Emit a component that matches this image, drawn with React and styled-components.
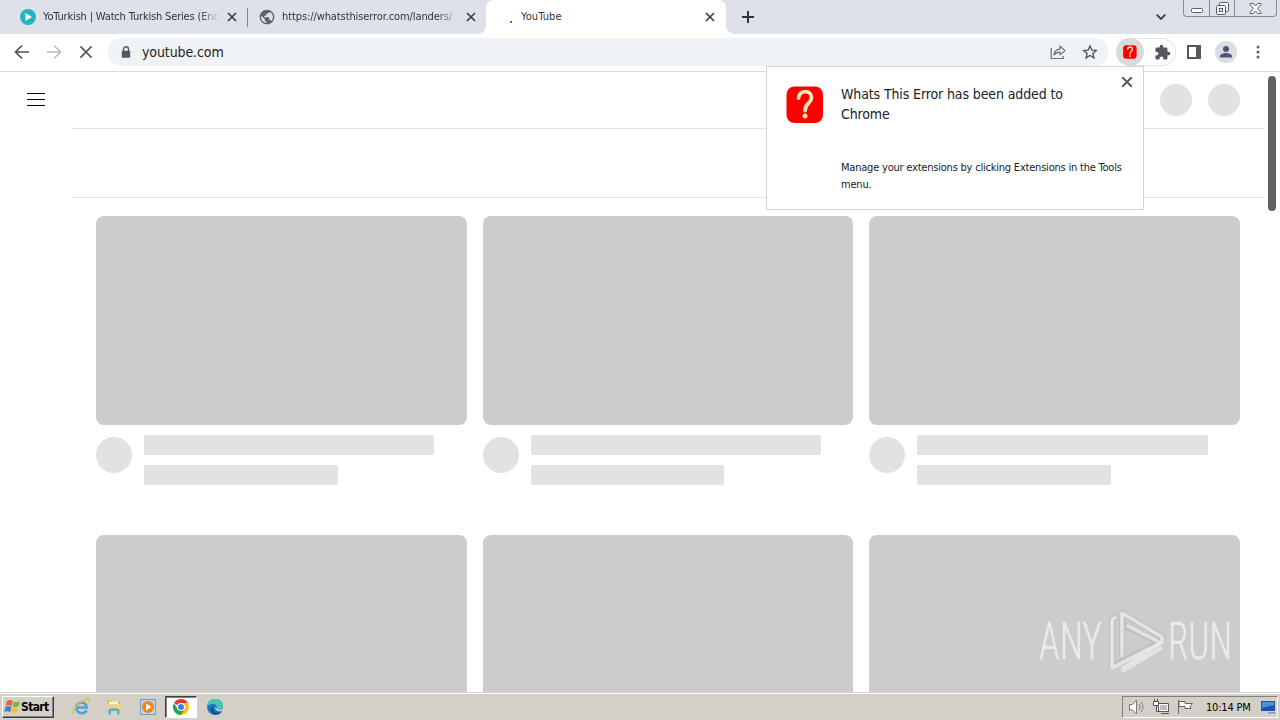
import React from 'react';
import styled, { createGlobalStyle } from 'styled-components';

const cards = [1, 2, 3, 4, 5, 6];

const CloseIcon = ({ size = 10, color = '#3c4043', width = 1.7 }) => (
  <svg width={size} height={size} viewBox="0 0 10 10" stroke={color} strokeWidth={width}>
    <path d="M1 1l8 8M9 1l-8 8" />
  </svg>
);

const QuestionIcon = ({ size }) => (
  <svg width={size} height={size} viewBox="0 0 38 38" fill="none">
    <rect x="0.5" y="0.5" width="36.500" height="36.500" rx="8" fill="#fe0000" />
    <path d="M12.500 12c1-9 13-8 13-.5c0 6-6.500 5.500-6.500 13" stroke="#ffe2b8" strokeWidth="3.800" strokeLinecap="round" />
    <circle cx="19" cy="30" r="2.500" fill="#ffe2b8" />
  </svg>
);

function TabStrip() {
  return (
    <StTabStrip>
      <StTab>
        <svg width="16" height="16" viewBox="0 0 16 16">
          <circle cx="8" cy="8" r="8" fill="#1fb5c1" />
          <path d="M5.500 4l6.500 4-6.500 4z" fill="#fff" />
        </svg>
        <StTabTitle $fade $spacing="-0.17px">YoTurkish | Watch Turkish Series (Enc</StTabTitle>
        <CloseIcon />
      </StTab>
      <StTab $divider>
        <svg width="16" height="16" viewBox="0 0 24 24" fill="#5f6368">
          <path d="M12 1C5.900 1 1 5.900 1 12s4.900 11 11 11 11-4.900 11-11S18.100 1 12 1zm-1 19.900C6.600 20.400 3.100 16.600 3.100 12c0-.7.100-1.300.2-1.900L8.700 15.400v1.100c0 1.200 1 2.200 2.300 2.200zm7.700-2.800c-.3-.9-1.100-1.500-2.100-1.500h-1.100v-3.300c0-.6-.5-1.100-1.100-1.100H7.700V10h2.200c.6 0 1.100-.5 1.100-1.100V6.700h2.200c1.200 0 2.200-1 2.200-2.200V4c3.200 1.300 5.500 4.400 5.500 8 0 2.300-.9 4.500-2.200 6.100z" />
        </svg>
        <StTabTitle $fade $spacing="-0.1px">https://whatsthiserror.com/landers/</StTabTitle>
        <CloseIcon />
      </StTab>
      <StTab $active>
        <StSpinner />
        <StTabTitle $spacing="0.1px">YouTube</StTabTitle>
        <CloseIcon />
      </StTab>
      <StNewTab>
        <svg width="12" height="12" viewBox="0 0 12 12" stroke="#303238" strokeWidth="2">
          <path d="M6 0v12M0 6h12" />
        </svg>
      </StNewTab>
      <StTabSearch>
        <svg width="10" height="6" viewBox="0 0 10 6" fill="none" stroke="#3c4043" strokeWidth="1.800">
          <path d="M0.700 0.700L5 5L9.300 0.700" />
        </svg>
      </StTabSearch>
      <StWindowControls>
        <StWindowButton $width="25px">
          <svg width="12" height="5" viewBox="0 0 12 5">
            <rect x="0.500" y="0.500" width="11" height="4" rx="1" fill="#fff" stroke="#5a6070" />
          </svg>
        </StWindowButton>
        <StWindowButton $width="25px" $raise>
          <svg width="13" height="13" viewBox="0 0 13 13" fill="#f4f5f7" stroke="#5a6070">
            <rect x="3.500" y="0.500" width="9" height="9" rx="1" />
            <rect x="0.500" y="3.500" width="9" height="9" rx="1" />
            <rect x="3.500" y="6.500" width="3" height="3" />
          </svg>
        </StWindowButton>
        <StWindowButton $width="42px" $raise>
          <svg width="13" height="11" viewBox="0 0 13 11" fill="#f8f8fa" stroke="#5a6070">
            <path d="M1 .5h3.300L6.500 3 8.700.5H12v1L8.700 5.500 12 9.500v1H8.700L6.500 8l-2.200 2.500H1v-1l3.300-4L1 1.500z" />
          </svg>
        </StWindowButton>
      </StWindowControls>
    </StTabStrip>
  );
}

function Toolbar() {
  return (
    <StToolbar>
      <StNavButton>
        <svg width="16" height="16" viewBox="0 0 16 16" fill="none" stroke="#505357" strokeWidth="1.700">
          <path d="M15 8H2M8 1.500L1.500 8L8 14.500" />
        </svg>
      </StNavButton>
      <StNavButton>
        <svg width="16" height="16" viewBox="0 0 16 16" fill="none" stroke="#babcbe" strokeWidth="1.700">
          <path d="M1 8h13M8 1.500L14.500 8L8 14.500" />
        </svg>
      </StNavButton>
      <StNavButton>
        <CloseIcon size={14} color="#505357" width={1.1} />
      </StNavButton>
      <StAddressBar>
        <svg width="10" height="13" viewBox="0 0 10 13">
          <path d="M2.500 6V3.300a2.500 2.500 0 0 1 5 0V6" fill="none" stroke="#55585d" strokeWidth="1.400" />
          <rect x="0.800" y="4.700" width="8.400" height="7" rx="1" fill="#55585d" />
        </svg>
        <StUrl>youtube.com</StUrl>
        <svg width="16" height="16" viewBox="0 0 16 16" fill="none" stroke="#6b6f74" strokeWidth="1.200">
          <path d="M1.200 4v10.500h12V12" />
          <path d="M4 11c.4-4 2.500-5.700 6-5.900V2.200L15 6.600l-5 4.300V8.200C7.400 8.200 5.500 9 4 11z" strokeLinejoin="round" />
        </svg>
        <svg width="16" height="16" viewBox="0 0 24 24" fill="none" stroke="#505358" strokeWidth="2">
          <path d="M12 3l2.700 6.200 6.700.6-5 4.500 1.500 6.500L12 17.300l-5.900 3.500 1.500-6.500-5-4.500 6.700-.6z" />
        </svg>
      </StAddressBar>
      <StExtensions>
        <StExtensionButton>
          <QuestionIcon size={14} />
        </StExtensionButton>
        <svg width="17" height="17" viewBox="0 0 24 24" fill="#55585d">
          <path d="M20.500 11H19V7c0-1.100-.9-2-2-2h-4V3.500C13 2.120 11.880 1 10.500 1S8 2.120 8 3.500V5H4c-1.100 0-1.990.9-1.990 2v3.800H3.500c1.490 0 2.700 1.210 2.700 2.700s-1.210 2.700-2.700 2.700H2V20c0 1.100.9 2 2 2h3.800v-1.500c0-1.490 1.210-2.700 2.700-2.700s2.700 1.210 2.700 2.700V22H17c1.100 0 2-.9 2-2v-4h1.500c1.380 0 2.500-1.120 2.500-2.500S21.880 11 20.500 11z" />
        </svg>
      </StExtensions>
      <StToolbarEnd>
        <svg width="14" height="14" viewBox="0 0 14 14">
          <path d="M0 0h14v14H0zM2 2v10h7V2z" fill="#55585d" fillRule="evenodd" />
        </svg>
        <StProfile>
          <svg width="12" height="12" viewBox="0 0 12 12" fill="#4a5672">
            <circle cx="6" cy="3" r="3" />
            <path d="M0 11.500V10c0-2 4-3 6-3s6 1 6 3v1.500z" />
          </svg>
        </StProfile>
        <svg width="4" height="14" viewBox="0 0 4 14" fill="#5f6368">
          <circle cx="2" cy="2" r="1.500" />
          <circle cx="2" cy="7" r="1.500" />
          <circle cx="2" cy="12" r="1.500" />
        </svg>
      </StToolbarEnd>
    </StToolbar>
  );
}

function ExtensionPopup() {
  return (
    <StPopup>
      <QuestionIcon size={38} />
      <StPopupBody>
        <StPopupTitle>
          Whats This Error has been added to
          <br />
          Chrome
        </StPopupTitle>
        <StPopupText>
          Manage your extensions by clicking Extensions in the Tools
          <br />
          menu.
        </StPopupText>
      </StPopupBody>
      <StPopupClose>
        <CloseIcon size={12} color="#55585d" width={1.6} />
      </StPopupClose>
    </StPopup>
  );
}

function Watermark() {
  return (
    <StWatermark width="206" height="70" viewBox="0 0 206 70">
      <g fill="#fff" fillOpacity="0.62" stroke="#fff" strokeOpacity="0.25" strokeWidth="0.800" fontFamily="Roboto, sans-serif" fontWeight="300" fontSize="51">
        <text x="6" y="53" textLength="63" lengthAdjust="spacingAndGlyphs">ANY</text>
        <text x="135" y="53" textLength="64" lengthAdjust="spacingAndGlyphs">RUN</text>
      </g>
      <g fill="none" strokeLinejoin="round" strokeLinecap="round">
        <g stroke="#aaa" strokeWidth="6" strokeOpacity="0.35">
          <path d="M82 12l-3 2v46l48-24" />
          <path d="M89 49V7l40 24M90 19l37 18-36 26" />
        </g>
        <g stroke="#e8e8e8" strokeWidth="3.600" strokeOpacity="0.9">
          <path d="M82 12c-2 0-3 2-3 4v46l50-26" />
          <path d="M89 50V7l40 24v4" />
          <path d="M95 20l33 17-38 25v3l38-23" />
        </g>
      </g>
    </StWatermark>
  );
}

function Taskbar() {
  return (
    <StTaskbar>
      <StStart>
        <svg width="17" height="16" viewBox="0 0 17 16">
          <path d="M3 2c2-1.500 4-1 6 0L7.700 7c-2-1-4-1-6 0z" fill="#e8632b" />
          <path d="M10 2.500c2 1 4 1 6-.5L14.700 7c-2 1.500-4 1.500-6 .5z" fill="#75b643" />
          <path d="M1.500 8c2-1.300 4-1 6 0L6.200 13c-2-1-4-1-6 0z" fill="#3d83c9" />
          <path d="M8.500 8.500c2 1 4 1 6-.3L13.200 13c-2 1.500-4 1.500-6 .5z" fill="#f5c130" />
        </svg>
        Start
      </StStart>
      <StTaskButton $width="33px">
        <svg width="18" height="18" viewBox="0 0 18 18" fill="none">
          <path d="M14.500 12.500c-2.500 4.500-10 3.500-10-3s10-6.500 10.200 0H5" stroke="#49a6dc" strokeWidth="2.600" />
          <path d="M1.500 16C-1 11 14-2 17 1.500c.7 1 0 2.500-.7 3.500" stroke="#e4b83f" strokeWidth="1.300" />
        </svg>
      </StTaskButton>
      <StTaskButton $width="34px">
        <svg width="16" height="16" viewBox="0 0 16 16">
          <path d="M1 1h5l1 1.500h7V13H1z" fill="#e0bd58" />
          <path d="M3 2.500h9v4H3z" fill="#fff6d0" />
          <path d="M1 5h14v8.500H1z" fill="#ecd486" />
          <path d="M2.500 15.500V11c0-2.500 11-2.500 11 0v4.500H11V12H5v3.500z" fill="#5aabd8" />
        </svg>
      </StTaskButton>
      <StTaskButton $width="34px">
        <svg width="16" height="17" viewBox="0 0 16 17">
          <rect x="0.500" y="0.500" width="15" height="15" fill="#b8d5ec" stroke="#6f9fc8" />
          <circle cx="8" cy="8" r="6" fill="#f58211" />
          <path d="M6.200 4.500L11.500 8l-5.300 3.500z" fill="#fff" />
        </svg>
      </StTaskButton>
      <StTaskButton $width="32px" $pressed>
        <svg width="16" height="16" viewBox="0 0 16 16">
          <path d="M8 8L1.070 4A8 8 0 0 1 14.930 4z" fill="#e33b2e" />
          <path d="M8 8V4h6.930A8 8 0 0 1 8 16z" fill="#fbc116" />
          <path d="M8 16A8 8 0 0 1 1.070 4L4.540 10L8 8l3.460 2z" fill="#2aa24c" />
          <circle cx="8" cy="8" r="4" fill="#fff" />
          <circle cx="8" cy="8" r="3" fill="#3f7de8" />
        </svg>
      </StTaskButton>
      <StTaskButton $width="36px">
        <svg width="16" height="16" viewBox="0 0 16 16">
          <circle cx="8" cy="8" r="8" fill="#1879c8" />
          <path d="M0 8C0-2 16-3 16 6.500c0 4-5 4.500-6.500 3C11 7 8 4 4.500 5 2 5.500.5 7 0 8z" fill="#45c7ad" />
          <path d="M6.300 7C5 9 6.500 13 10.500 13.500c2 .2 3.500-.5 4.500-1.300C13 16 7 17 4.500 13 3 10.500 4 7.500 6.300 7z" fill="#144f94" />
          <path d="M9.500 9.500c1.500 1.500 5 1.500 6.300-.5l.2 2c-3 2.500-7.500 1-7.800-1.500 0-1 .5-1.500.8-1.800z" fill="#d4d0c8" />
        </svg>
      </StTaskButton>
      <StTray>
        <svg width="18" height="16" viewBox="0 0 18 16" fill="none" stroke="#777">
          <path d="M1.500 5.500h3L8.500 1v14l-4-4h-3z" fill="#fff" />
          <path d="M11 5c1.300 2 1.300 4 0 6M13 3c2.500 3 2.500 7 0 10" />
        </svg>
        <svg width="17" height="16" viewBox="0 0 17 16" fill="#fff" stroke="#555">
          <path d="M5.500 4.500h10v8h-10zM8 14.500h8M3.500 7v5.500h4" />
          <path d="M7 6h7v5H7z" fill="#bbb" stroke="none" />
          <path d="M0.500 2.500h5v4h-5zM1.500 0v2M4.500 0v2" />
        </svg>
        <svg width="17" height="16" viewBox="0 0 17 16" fill="#fff" stroke="#666">
          <path d="M1.500 1v14" />
          <path d="M2 2.500h6v2h7.500l-2.500 3 1 2H8v-2H2z" />
        </svg>
        <StClock>10:14 PM</StClock>
        <svg width="16" height="14" viewBox="0 0 16 14">
          <path d="M1 1h14v10H1z" fill="#1c54ad" />
          <path d="M2 2h12v3L2 8z" fill="#4c8ee0" />
          <path d="M8 12h7v1.500H8z" fill="#6f96c8" />
        </svg>
      </StTray>
    </StTaskbar>
  );
}

function App() {
  return (
    <StScreen>
      <GlobalStyle />
      <TabStrip />
      <Toolbar />
      <StPage>
        <StMasthead>
          <svg width="18" height="14" viewBox="0 0 18 14" fill="#030303">
            <path d="M0 0h18v1H0zM0 6h18v1H0zM0 12h18v1H0z" />
          </svg>
          <StAccount>
            <StCircle $size="32px" />
            <StCircle $size="32px" />
          </StAccount>
        </StMasthead>
        <StChipBar />
        <StGrid>
          {cards.map((card) => (
            <StCard key={card}>
              <StThumbnail />
              <StDetails>
                <StCircle $size="36px" />
                <StLines>
                  <StLine $width="90%" />
                  <StLine $width="60%" />
                </StLines>
              </StDetails>
            </StCard>
          ))}
        </StGrid>
        <StScrollThumb />
      </StPage>
      <Taskbar />
      <ExtensionPopup />
      <Watermark />
    </StScreen>
  );
}

export default App;

const GlobalStyle = createGlobalStyle`
  * {
    box-sizing: border-box;
  }
  body {
    margin: 0;
    overflow: hidden;
    font-family: "DejaVu Sans Condensed", "DejaVu Sans", sans-serif;
    font-stretch: condensed;
    color: #202124;
  }
  svg {
    display: block;
    flex-shrink: 0;
  }
`

const StScreen = styled.div`
  position: relative;
  width: 1280px;
  height: 720px;
  display: flex;
  flex-direction: column;
  overflow: hidden;
  background: #fff;
`

const StTabStrip = styled.div`
  height: 34px;
  flex-shrink: 0;
  display: flex;
  padding-left: 8px;
  background: #dee1e8;
`
const StTab = styled.div`
  position: relative;
  width: ${({ $active }) => ($active ? '240px' : '239px')};
  height: 34px;
  display: flex;
  align-items: center;
  gap: 7px;
  padding: 0 ${({ $active }) => ($active ? '11px 0 17px' : '10px 0 12px')};
  border-radius: 8px 8px 0 0;
  background: ${({ $active }) => ($active ? '#fff' : 'transparent')};

  ${({ $divider }) => $divider && `
    &::before {
      content: "";
      position: absolute;
      left: 0;
      top: 8px;
      width: 1px;
      height: 19px;
      background: #84878d;
    }
  `}
  ${({ $active }) => $active && `
    &::before, &::after {
      content: "";
      position: absolute;
      bottom: 0;
      width: 8px;
      height: 8px;
    }
    &::before {
      left: -8px;
      background: radial-gradient(circle at 0 0, transparent 7.5px, #fff 8px);
    }
    &::after {
      right: -8px;
      background: radial-gradient(circle at 100% 0, transparent 7.5px, #fff 8px);
    }
  `}
`
const StTabTitle = styled.span`
  flex: 1;
  min-width: 0;
  white-space: nowrap;
  font-size: 11px;
  line-height: 16px;
  letter-spacing: ${({ $spacing }) => $spacing || '0'};
  color: #303338;
  ${({ $fade }) => $fade && 'mask-image: linear-gradient(90deg, #000 88%, transparent);'}
`
const StSpinner = styled.span`
  width: 2px;
  height: 2px;
  margin: 10px 2px 0 7px;
  background: #3970dc;
`
const StNewTab = styled.div`
  width: 44px;
  display: flex;
  align-items: center;
  justify-content: center;
`
const StTabSearch = styled.div`
  display: flex;
  align-items: center;
  margin-left: auto;
  margin-right: 17px;
`
const StWindowControls = styled.div`
  height: 17px;
  display: flex;
  margin-right: 3px;
  border: 1px solid #878c98;
  border-top: none;
  border-radius: 0 0 4px 4px;
`
const StWindowButton = styled.div`
  width: ${({ $width }) => $width};
  display: flex;
  align-items: ${({ $raise }) => ($raise ? 'center' : 'flex-end')};
  justify-content: center;
  padding-bottom: ${({ $raise }) => ($raise ? '0' : '3px')};
  & + & {
    border-left: 1px solid #878c98;
  }
`

const StToolbar = styled.div`
  height: 38px;
  flex-shrink: 0;
  display: flex;
  align-items: center;
  padding: 0 20px 1px 6px;
  border-bottom: 1px solid #dadce0;
`
const StNavButton = styled.div`
  width: 32px;
  display: flex;
  justify-content: center;
`
const StAddressBar = styled.div`
  width: 1000px;
  height: 28px;
  display: flex;
  align-items: center;
  gap: 16px;
  margin-left: 6px;
  padding: 0 10px 0 13px;
  border-radius: 14px;
  background: #f0f3f6;
`
const StUrl = styled.span`
  flex: 1;
  margin-left: -5px;
  font-size: 14px;
  letter-spacing: -0.1px;
`
const StExtensions = styled.div`
  width: 60px;
  height: 28px;
  display: flex;
  align-items: center;
  gap: 10px;
  margin-left: 8px;
  border-radius: 14px;
  box-shadow: inset 0 0 0 1px #e3e5e8;
`
const StExtensionButton = styled.div`
  width: 28px;
  height: 28px;
  display: flex;
  align-items: center;
  justify-content: center;
  border-radius: 50%;
  background: #dadada;
`
const StToolbarEnd = styled.div`
  flex: 1;
  display: flex;
  align-items: center;
  padding-left: 11px;
`
const StProfile = styled.div`
  width: 22px;
  height: 22px;
  display: flex;
  align-items: center;
  justify-content: center;
  margin: 0 19px 0 14px;
  border-radius: 50%;
  background: #d9dde4;
`

const StPopup = styled.div`
  position: absolute;
  left: 766px;
  top: 66px;
  width: 378px;
  height: 144px;
  display: flex;
  gap: 17px;
  padding: 19px 0 0 19px;
  border: 1px solid #d2d4d6;
  background: #fff;
`
const StPopupBody = styled.div`
  display: flex;
  flex-direction: column;
  gap: 35px;
  margin-top: -2px;
  white-space: nowrap;
`
const StPopupTitle = styled.div`
  font-size: 14px;
  line-height: 20px;
  letter-spacing: -0.12px;
`
const StPopupText = styled.div`
  font-size: 11px;
  line-height: 17px;
  letter-spacing: -0.21px;
`
const StPopupClose = styled.div`
  position: absolute;
  top: 9px;
  right: 10px;
`

const StPage = styled.main`
  position: relative;
  flex: 1;
  min-height: 0;
  overflow: hidden;
`
const StMasthead = styled.header`
  height: 56px;
  display: flex;
  align-items: center;
  justify-content: space-between;
  padding: 0 40px 0 27px;
`
const StAccount = styled.div`
  display: flex;
  gap: 16px;
`
const StCircle = styled.div`
  width: ${({ $size }) => $size};
  height: ${({ $size }) => $size};
  flex-shrink: 0;
  border-radius: 50%;
  background: #e2e2e2;
`
const StChipBar = styled.div`
  height: 70px;
  margin: 0 16px 0 72px;
  border-top: 1px solid #e2e2e2;
  border-bottom: 1px solid #e2e2e2;
`
const StGrid = styled.div`
  display: grid;
  grid-template-columns: repeat(3, 1fr);
  column-gap: 16px;
  padding: 18px 40px 0 96px;
`
const StCard = styled.div`
  height: 319px;
`
const StThumbnail = styled.div`
  height: 209px;
  border-radius: 8px;
  background: #ccc;
`
const StDetails = styled.div`
  display: flex;
  gap: 12px;
  padding-top: 12px;
`
const StLines = styled.div`
  flex: 1;
  display: flex;
  flex-direction: column;
  gap: 10px;
  margin-top: -2px;
`
const StLine = styled.div`
  width: ${({ $width }) => $width};
  height: 20px;
  border-radius: 2px;
  background: #e2e2e2;
`
const StScrollThumb = styled.div`
  position: absolute;
  top: 4px;
  right: 4px;
  width: 8px;
  height: 135px;
  border-radius: 4px;
  background: #606060;
`
const StWatermark = styled.svg`
  position: absolute;
  left: 1033px;
  top: 606px;
`

const StTaskbar = styled.footer`
  height: 28px;
  flex-shrink: 0;
  display: flex;
  align-items: flex-start;
  padding: 2px 2px 0;
  border-top: 1px solid #d4d0c8;
  background: #d4d0c8;
  box-shadow: inset 0 1px #fff;
`
const StStart = styled.div`
  width: 52px;
  height: 22px;
  display: flex;
  align-items: center;
  margin: 1px 10px 0 0;
  padding-left: 1px;
  border: 1px solid;
  border-color: #fff #404040 #404040 #fff;
  box-shadow: inset -1px -1px #808080;
  font-size: 12px;
  font-weight: 700;
  letter-spacing: -0.65px;
  color: #000;
`
const StTaskButton = styled.div`
  width: ${({ $width }) => $width};
  height: 22px;
  display: flex;
  align-items: center;
  justify-content: center;
  margin-top: 1px;
  ${({ $pressed }) => $pressed && `
    border: 1px solid;
    border-color: #404040 #fff #fff #404040;
    background: #fff;
    box-shadow: inset 1px 1px #808080;
  `}
`
const StTray = styled.div`
  height: 22px;
  display: flex;
  align-items: center;
  gap: 7px;
  margin: 1px 0 0 auto;
  padding: 0 1px 0 5px;
  border: 1px solid;
  border-color: #808080 #fff #fff #808080;
`
const StClock = styled.span`
  width: 47px;
  margin-left: 5px;
  white-space: nowrap;
  font-size: 11px;
  letter-spacing: -0.2px;
  color: #000;
`
